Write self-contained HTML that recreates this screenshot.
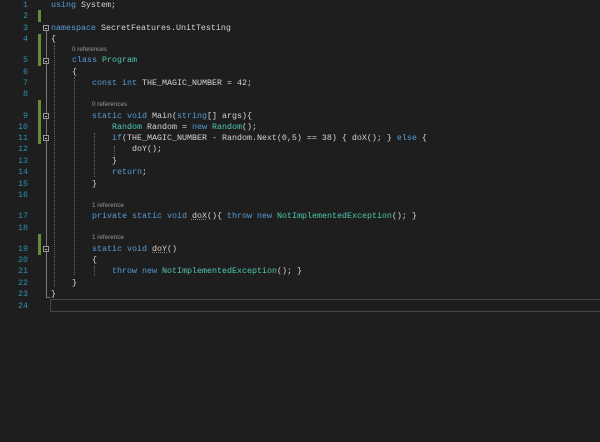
<html><head><style>
body{margin:0;width:600px;height:442px;background:#1e1e1e;overflow:hidden;position:relative;font-family:"Liberation Mono",monospace;font-size:8.33px;color:#d4d4d4}
#w{position:absolute;left:0;top:1px;width:600px;height:441px}
.n{position:absolute;left:0;width:28px;text-align:right;color:#2b91af;line-height:11px;height:11px}
.l{position:absolute;line-height:11px;height:11px;white-space:pre}
.r{position:absolute;font-family:"Liberation Sans",sans-serif;font-size:6.3px;color:#999;line-height:8px}
.k{color:#569cd6}.t{color:#4ec9b0}
.g{position:absolute;left:38px;width:3px;background:#6a8a35}
.f{position:absolute;left:43px;width:6px;height:6px;border:1px solid #999;box-sizing:border-box}
.f:after{content:"";position:absolute;left:1px;top:2px;width:2px;height:1px;background:#bbb}
.v{position:absolute;left:46px;width:1px;background:#777}
.d{position:absolute;width:0;border-left:1px dotted #666}
.u{text-decoration:underline dotted #888}
</style></head><body><div id="w">
<div class="n" style="top:-1px">1</div><div class="l" style="left:51px;top:-1px"><span class="k">using</span> System;</div>
<div class="n" style="top:10px">2</div>
<div class="n" style="top:22px">3</div><div class="l" style="left:51px;top:22px"><span class="k">namespace</span> SecretFeatures.UnitTesting</div>
<div class="n" style="top:33px">4</div><div class="l" style="left:51px;top:33px">{</div>
<div class="r" style="left:72px;top:45px">0 references</div>
<div class="n" style="top:54px">5</div><div class="l" style="left:72px;top:54px"><span class="k">class</span> <span class="t">Program</span></div>
<div class="n" style="top:66px">6</div><div class="l" style="left:72px;top:66px">{</div>
<div class="n" style="top:77px">7</div><div class="l" style="left:92px;top:77px"><span class="k">const</span> <span class="k">int</span> THE_MAGIC_NUMBER = 42;</div>
<div class="n" style="top:88px">8</div>
<div class="r" style="left:92px;top:100px">0 references</div>
<div class="n" style="top:110px">9</div><div class="l" style="left:92px;top:110px"><span class="k">static</span> <span class="k">void</span> Main(<span class="k">string</span>[] args){</div>
<div class="n" style="top:121px">10</div><div class="l" style="left:112px;top:121px"><span class="t">Random</span> Random = <span class="k">new</span> <span class="t">Random</span>();</div>
<div class="n" style="top:132px">11</div><div class="l" style="left:112px;top:132px"><span class="k">if</span>(THE_MAGIC_NUMBER - Random.Next(0,5) == 38) { doX(); } <span class="k">else</span> {</div>
<div class="n" style="top:143px">12</div><div class="l" style="left:132px;top:143px">doY();</div>
<div class="n" style="top:155px">13</div><div class="l" style="left:112px;top:155px">}</div>
<div class="n" style="top:166px">14</div><div class="l" style="left:112px;top:166px"><span class="k">return</span>;</div>
<div class="n" style="top:178px">15</div><div class="l" style="left:92px;top:178px">}</div>
<div class="n" style="top:189px">16</div>
<div class="r" style="left:92px;top:201px">1 reference</div>
<div class="n" style="top:210px">17</div><div class="l" style="left:92px;top:210px"><span class="k">private</span> <span class="k">static</span> <span class="k">void</span> <span class="u">doX</span>(){ <span class="k">throw</span> <span class="k">new</span> <span class="t">NotImplementedException</span>(); }</div>
<div class="n" style="top:222px">18</div>
<div class="r" style="left:92px;top:233px">1 reference</div>
<div class="n" style="top:243px">19</div><div class="l" style="left:92px;top:243px"><span class="k">static</span> <span class="k">void</span> <span class="u">doY</span>()</div>
<div class="n" style="top:254px">20</div><div class="l" style="left:92px;top:254px">{</div>
<div class="n" style="top:265px">21</div><div class="l" style="left:112px;top:265px"><span class="k">throw</span> <span class="k">new</span> <span class="t">NotImplementedException</span>(); }</div>
<div class="n" style="top:277px">22</div><div class="l" style="left:72px;top:277px">}</div>
<div class="n" style="top:288px">23</div><div class="l" style="left:51px;top:288px">}</div>
<div class="n" style="top:300px">24</div>
<div class="g" style="top:9px;height:12px"></div>
<div class="g" style="top:33px;height:32px"></div>
<div class="g" style="top:99px;height:44px"></div>
<div class="g" style="top:233px;height:21px"></div>
<div class="v" style="top:30px;height:267px"></div>
<div class="v" style="top:296px;width:4px;height:1px"></div>
<div class="f" style="top:24px;background:#1e1e1e"></div>
<div class="f" style="top:57px;background:#1e1e1e"></div>
<div class="f" style="top:112px;background:#1e1e1e"></div>
<div class="f" style="top:134px;background:#1e1e1e"></div>
<div class="f" style="top:245px;background:#1e1e1e"></div>
<div class="d" style="left:54px;top:44px;height:242px"></div>
<div class="d" style="left:74px;top:76px;height:198px"></div>
<div class="d" style="left:94px;top:132px;height:44px"></div>
<div class="d" style="left:94px;top:265px;height:10px"></div>
<div class="d" style="left:114px;top:145px;height:10px"></div>
<div style="position:absolute;left:50px;top:298px;width:560px;height:11px;border:1px solid #464646"></div>
</div></body></html>
